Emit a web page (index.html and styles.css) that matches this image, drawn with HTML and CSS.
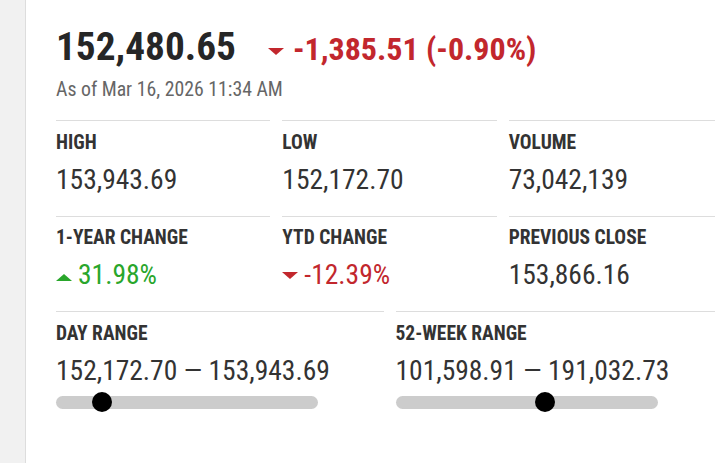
FILE: index.html
```html
<!DOCTYPE html>
<html>
<head>
<meta charset="utf-8">
<link rel="stylesheet" href="styles.css">
</head>
<body>
<aside class="sidebar"></aside>
<main class="quote">
  <div class="headline">
    <span class="price">152,480.65</span>
    <span class="change down"><span class="tri tri-down big"></span><span>-1,385.51 (-0.90%)</span></span>
  </div>
  <div class="asof">As of Mar 16, 2026 11:34 AM</div>

  <div class="grid three">
    <div class="cell"><div class="label">HIGH</div><div class="value">153,943.69</div></div>
    <div class="cell"><div class="label">LOW</div><div class="value">152,172.70</div></div>
    <div class="cell"><div class="label">VOLUME</div><div class="value">73,042,139</div></div>
    <div class="cell"><div class="label">1-YEAR CHANGE</div><div class="value up"><span class="tri tri-up"></span><span>31.98%</span></div></div>
    <div class="cell"><div class="label">YTD CHANGE</div><div class="value down"><span class="tri tri-down"></span><span>-12.39%</span></div></div>
    <div class="cell"><div class="label">PREVIOUS CLOSE</div><div class="value">153,866.16</div></div>
  </div>
  <div class="grid two">
    <div class="cell">
      <div class="label">DAY RANGE</div>
      <div class="value">152,172.70 — 153,943.69</div>
      <div class="track"><span class="knob" style="left: 17.4%"></span></div>
    </div>
    <div class="cell">
      <div class="label">52-WEEK RANGE</div>
      <div class="value">101,598.91 — 191,032.73</div>
      <div class="track"><span class="knob" style="left: 56.9%"></span></div>
    </div>
  </div>
</main>
</body>
</html>
```

FILE: styles.css
```css
html, body {
  margin: 0;
  padding: 0;
  background: #fff;
}
body {
  display: flex;
  height: 463px;
  overflow: hidden;
  font-family: "Roboto Condensed", Roboto, "Liberation Sans", sans-serif;
  color: #333;
}
.sidebar {
  width: 25px;
  flex: none;
  background: #f1f1f1;
  border-right: 1px solid #dddddd;
}
.quote {
  flex: none;
  width: 667px;
  padding: 27px 0 0 30px;
}
.headline {
  display: flex;
  align-items: baseline;
  gap: 32px;
}
.price {
  font-size: 39.3px;
  line-height: 40px;
  font-weight: 700;
  color: #262626;
}
.change {
  display: flex;
  align-items: baseline;
  font-size: 32px;
  line-height: 32px;
  font-weight: 700;
}
.down { color: #c2272d; }
.up { color: #29a62b; }
.tri {
  display: block;
  flex: none;
  align-self: center;
  width: 0;
  height: 0;
  border-left: 8px solid transparent;
  border-right: 8px solid transparent;
  margin-right: 6px;
}
.tri-down { border-top: 7px solid #c2272d; }
.tri-up { border-bottom: 7px solid #29a62b; margin-top: 4px; }
.tri.big { margin-right: 9px; margin-top: 4px; }
.asof {
  font-size: 19.8px;
  line-height: 20px;
  color: #666;
  margin-top: 13px;
  margin-bottom: 20px;
}
.grid {
  display: grid;
  column-gap: 12px;
}
.three { grid-template-columns: repeat(3, 1fr); }
.two { grid-template-columns: repeat(2, 1fr); }
.cell {
  box-sizing: border-box;
  border-top: 1px solid #dddddd;
  height: 95.5px;
}
.label {
  font-size: 19.5px;
  line-height: 20px;
  font-weight: 700;
  margin-top: 11.5px;
}
.value {
  font-size: 27.5px;
  line-height: 28px;
  margin-top: 13px;
  display: flex;
  align-items: center;
}
.track {
  position: relative;
  width: 80%;
  height: 13px;
  border-radius: 7px;
  background: #cccccc;
  margin-top: 11px;
}
.knob {
  position: absolute;
  top: -4px;
  width: 20px;
  height: 20px;
  margin-left: -10px;
  border-radius: 50%;
  background: #000;
}
```
